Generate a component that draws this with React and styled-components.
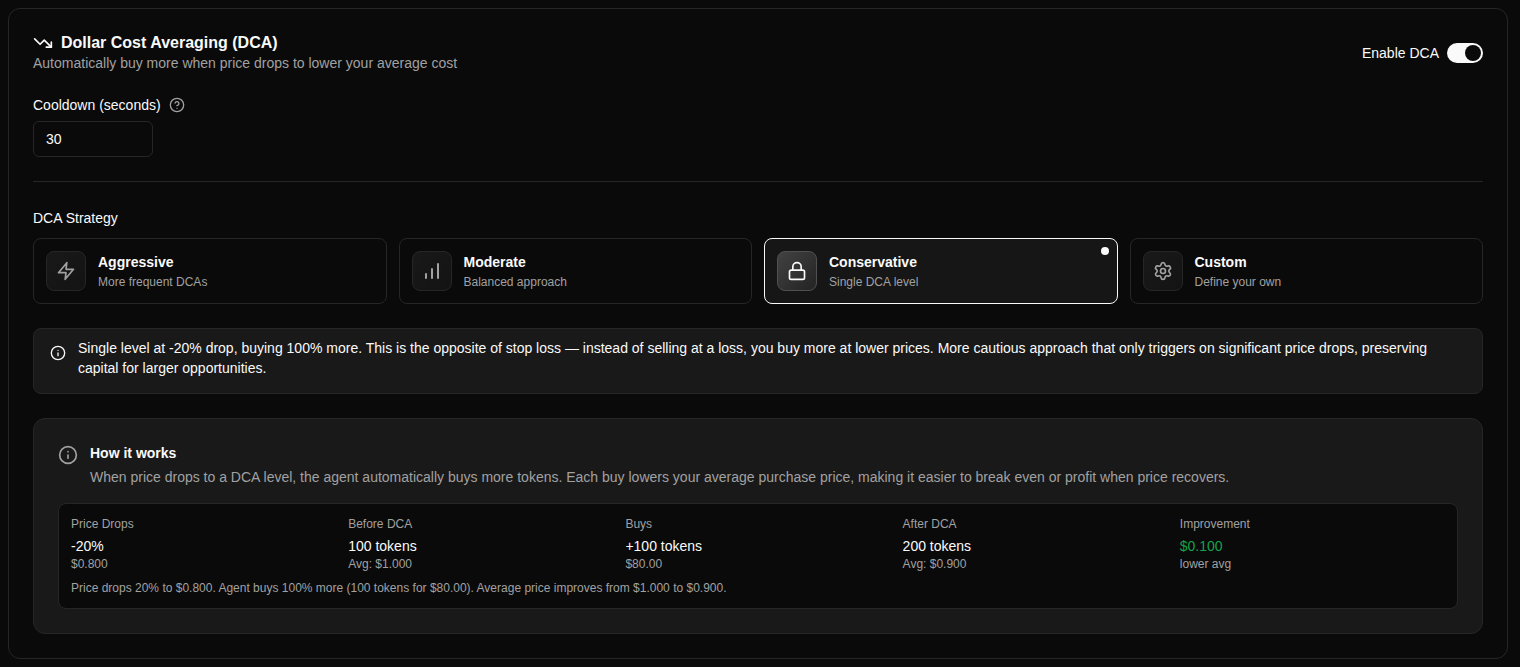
import React, { useState } from 'react'
import styled, { createGlobalStyle } from 'styled-components'
import { TrendingDown, CircleHelp, Info } from 'lucide-react'

const colors = {
  background: '#0a0a0a',
  muted: '#191919',
  selected: '#161616',
  border: '#262626',
  text: '#fafafa',
  textMuted: '#a1a1a1',
  success: '#16a34a'
}

const GlobalStyle = createGlobalStyle`
  *, *::before, *::after {
    box-sizing: border-box;
  }
  body {
    margin: 0;
    background: ${colors.background};
    color: ${colors.text};
    font-family: 'Liberation Sans', Arial, sans-serif;
    font-size: 14px;
    line-height: 20px;
  }
  button, input {
    font: inherit;
    color: inherit;
  }
  h2, h3, p, dl, dd, dt {
    margin: 0;
  }
`

const Page = styled.main`
  padding: 8px 12px 8px 8px;
`

const Card = styled.section`
  display: flex;
  flex-direction: column;
  gap: 24px;
  padding: 24px;
  border: 1px solid ${colors.border};
  border-radius: 12px;
`

const Header = styled.header`
  display: flex;
  align-items: center;
  justify-content: space-between;
`

const Title = styled.h2`
  display: flex;
  align-items: center;
  gap: 8px;
  font-size: 16px;
  line-height: 20px;
  font-weight: 700;
`

const Muted = styled.p`
  color: ${colors.textMuted};
`

const SwitchField = styled.div`
  display: flex;
  align-items: center;
  gap: 8px;
`

const Switch = styled.button`
  display: flex;
  justify-content: ${({ $on }) => ($on ? 'flex-end' : 'flex-start')};
  width: 36px;
  height: 20px;
  padding: 2px;
  border: 0;
  border-radius: 10px;
  background: ${({ $on }) => ($on ? colors.text : colors.border)};
  cursor: pointer;
`

const Thumb = styled.span`
  width: 16px;
  height: 16px;
  border-radius: 50%;
  background: ${colors.background};
`

const Field = styled.div`
  display: flex;
  flex-direction: column;
  gap: 8px;
`

const FieldLabel = styled.div`
  display: flex;
  align-items: center;
  gap: 8px;
  line-height: 16px;
`

const HelpButton = styled.button`
  display: flex;
  padding: 0;
  border: 0;
  background: none;
  color: ${colors.textMuted};
`

const NumberInput = styled.input`
  width: 120px;
  height: 36px;
  padding: 0 12px;
  border: 1px solid ${colors.border};
  border-radius: 6px;
  background: transparent;
  appearance: textfield;
  &::-webkit-inner-spin-button {
    display: none;
  }
`

const Divider = styled.hr`
  width: 100%;
  height: 1px;
  margin: 0;
  border: 0;
  background: ${colors.border};
`

const StrategyLabel = styled.h3`
  font-size: 14px;
  line-height: 24px;
  font-weight: 400;
`

const StrategyGrid = styled.div`
  display: grid;
  grid-template-columns: repeat(4, 1fr);
  gap: 12px;
`

const StrategyCard = styled.button`
  position: relative;
  display: flex;
  align-items: center;
  gap: 12px;
  padding: 12px;
  border: 1px solid ${({ $active }) => ($active ? colors.text : colors.border)};
  border-radius: 8px;
  background: ${({ $active }) => ($active ? colors.selected : 'transparent')};
  text-align: left;
  cursor: pointer;
`

const StrategyIcon = styled.span`
  display: flex;
  align-items: center;
  justify-content: center;
  width: 40px;
  height: 40px;
  border: 1px solid ${({ $active }) => ($active ? '#505050' : colors.border)};
  border-radius: 8px;
  background: ${({ $active }) => ($active ? 'linear-gradient(135deg, #424242, #232323)' : 'linear-gradient(135deg, #191919, #131313)')};
  color: ${({ $active }) => ($active ? colors.text : colors.textMuted)};
`

const StrategyText = styled.span`
  display: flex;
  flex-direction: column;
  gap: 2px;
`

const StrategyName = styled.span`
  font-weight: 700;
`

const StrategyHint = styled.span`
  font-size: 12px;
  line-height: 16px;
  color: ${colors.textMuted};
`

const ActiveDot = styled.span`
  position: absolute;
  top: 8px;
  right: 8px;
  width: 8px;
  height: 8px;
  border-radius: 50%;
  background: ${colors.text};
`

const Alert = styled.div`
  display: flex;
  gap: 12px;
  padding: 9px 16px 15px;
  border: 1px solid ${colors.border};
  border-radius: 8px;
  background: ${colors.muted};
  svg {
    flex: none;
    margin-top: 7px;
  }
`

const HowItWorks = styled.section`
  display: flex;
  flex-direction: column;
  gap: 16px;
  padding: 24px;
  border: 1px solid ${colors.border};
  border-radius: 12px;
  background: ${colors.muted};
`

const HowHeader = styled.div`
  display: flex;
  gap: 12px;
  svg {
    flex: none;
    margin-top: 2px;
    color: ${colors.textMuted};
  }
`

const HowText = styled.div`
  display: flex;
  flex-direction: column;
  gap: 4px;
`

const HowTitle = styled.h3`
  font-size: 14px;
  font-weight: 700;
`

const Example = styled.div`
  display: flex;
  flex-direction: column;
  gap: 8px;
  padding: 12px;
  border: 1px solid ${colors.border};
  border-radius: 8px;
  background: ${colors.background};
  color: ${colors.textMuted};
  font-size: 12px;
  line-height: 16px;
`

const Stats = styled.dl`
  display: grid;
  grid-template-columns: repeat(5, 1fr);
  gap: 12px;
`

const StatValue = styled.dd`
  margin-top: 4px;
  font-size: 14px;
  line-height: 20px;
  color: ${({ $positive }) => ($positive ? colors.success : colors.text)};
`

const BoltIcon = () => (
  <svg width="20" height="20" viewBox="0 0 24 24" fill="none" stroke="currentColor" strokeWidth="2" strokeLinecap="round" strokeLinejoin="round">
    <path d="M13 2 3 14h9l-1 8 10-12h-9l1-8z" />
  </svg>
)

const BarsIcon = () => (
  <svg width="20" height="20" viewBox="0 0 20 20" fill="none" stroke="currentColor" strokeWidth="2" strokeLinecap="round">
    <path d="M4 13v4M10 8v9M16 3v14" />
  </svg>
)

const LockIcon = () => (
  <svg width="20" height="20" viewBox="0 0 24 24" fill="none" stroke="currentColor" strokeWidth="2" strokeLinecap="round" strokeLinejoin="round">
    <rect x="3" y="11" width="18" height="11" rx="2" />
    <path d="M7 11V7a5 5 0 0 1 10 0v4" />
  </svg>
)

const GearIcon = () => (
  <svg width="20" height="20" viewBox="0 0 24 24" fill="none" stroke="currentColor" strokeWidth="2" strokeLinecap="round" strokeLinejoin="round">
    <path d="M9.671 4.136a2.34 2.34 0 0 1 4.659 0 2.34 2.34 0 0 0 3.319 1.915 2.34 2.34 0 0 1 2.33 4.033 2.34 2.34 0 0 0 0 3.831 2.34 2.34 0 0 1-2.33 4.033 2.34 2.34 0 0 0-3.319 1.915 2.34 2.34 0 0 1-4.659 0 2.34 2.34 0 0 0-3.32-1.915 2.34 2.34 0 0 1-2.33-4.033 2.34 2.34 0 0 0 0-3.831A2.34 2.34 0 0 1 6.35 6.051a2.34 2.34 0 0 0 3.319-1.915" />
    <circle cx="12" cy="12" r="3" />
  </svg>
)

const strategies = [
  { id: 'aggressive', name: 'Aggressive', hint: 'More frequent DCAs', Icon: BoltIcon },
  { id: 'moderate', name: 'Moderate', hint: 'Balanced approach', Icon: BarsIcon },
  { id: 'conservative', name: 'Conservative', hint: 'Single DCA level', Icon: LockIcon },
  { id: 'custom', name: 'Custom', hint: 'Define your own', Icon: GearIcon }
]

const stats = [
  { label: 'Price Drops', value: '-20%', note: '$0.800' },
  { label: 'Before DCA', value: '100 tokens', note: 'Avg: $1.000' },
  { label: 'Buys', value: '+100 tokens', note: '$80.00' },
  { label: 'After DCA', value: '200 tokens', note: 'Avg: $0.900' },
  { label: 'Improvement', value: '$0.100', note: 'lower avg', positive: true }
]

export default function App() {
  const [enabled, setEnabled] = useState(true)
  const [cooldown, setCooldown] = useState(30)
  const [strategy, setStrategy] = useState('conservative')

  return (
    <Page>
      <GlobalStyle />
      <Card>
        <Header>
          <div>
            <Title><TrendingDown size={20} />Dollar Cost Averaging (DCA)</Title>
            <Muted>Automatically buy more when price drops to lower your average cost</Muted>
          </div>
          <SwitchField>
            <label htmlFor="enable-dca">Enable DCA</label>
            <Switch id="enable-dca" type="button" role="switch" aria-checked={enabled} $on={enabled} onClick={() => setEnabled(!enabled)}>
              <Thumb />
            </Switch>
          </SwitchField>
        </Header>

        <Field>
          <FieldLabel>
            <label htmlFor="cooldown">Cooldown (seconds)</label>
            <HelpButton type="button" aria-label="About cooldown"><CircleHelp size={16} /></HelpButton>
          </FieldLabel>
          <NumberInput id="cooldown" type="number" value={cooldown} onChange={e => setCooldown(e.target.value)} />
        </Field>

        <Divider />

        <Field>
          <StrategyLabel id="strategy-label">DCA Strategy</StrategyLabel>
          <StrategyGrid role="group" aria-labelledby="strategy-label">
            {strategies.map(({ id, name, hint, Icon }) => {
              const active = id === strategy
              return (
                <StrategyCard key={id} type="button" aria-pressed={active} $active={active} onClick={() => setStrategy(id)}>
                  <StrategyIcon $active={active}><Icon /></StrategyIcon>
                  <StrategyText>
                    <StrategyName>{name}</StrategyName>
                    <StrategyHint>{hint}</StrategyHint>
                  </StrategyText>
                  {active && <ActiveDot />}
                </StrategyCard>
              )
            })}
          </StrategyGrid>
        </Field>

        <Alert>
          <Info size={16} />
          <p>Single level at -20% drop, buying 100% more. This is the opposite of stop loss — instead of selling at a loss, you buy more at lower prices. More cautious approach that only triggers on significant price drops, preserving capital for larger opportunities.</p>
        </Alert>

        <HowItWorks>
          <HowHeader>
            <Info size={20} />
            <HowText>
              <HowTitle>How it works</HowTitle>
              <Muted>When price drops to a DCA level, the agent automatically buys more tokens. Each buy lowers your average purchase price, making it easier to break even or profit when price recovers.</Muted>
            </HowText>
          </HowHeader>
          <Example>
            <Stats>
              {stats.map(({ label, value, note, positive }) => (
                <div key={label}>
                  <dt>{label}</dt>
                  <StatValue $positive={positive}>{value}</StatValue>
                  <dd>{note}</dd>
                </div>
              ))}
            </Stats>
            <p>Price drops 20% to $0.800. Agent buys 100% more (100 tokens for $80.00). Average price improves from $1.000 to $0.900.</p>
          </Example>
        </HowItWorks>
      </Card>
    </Page>
  )
}
